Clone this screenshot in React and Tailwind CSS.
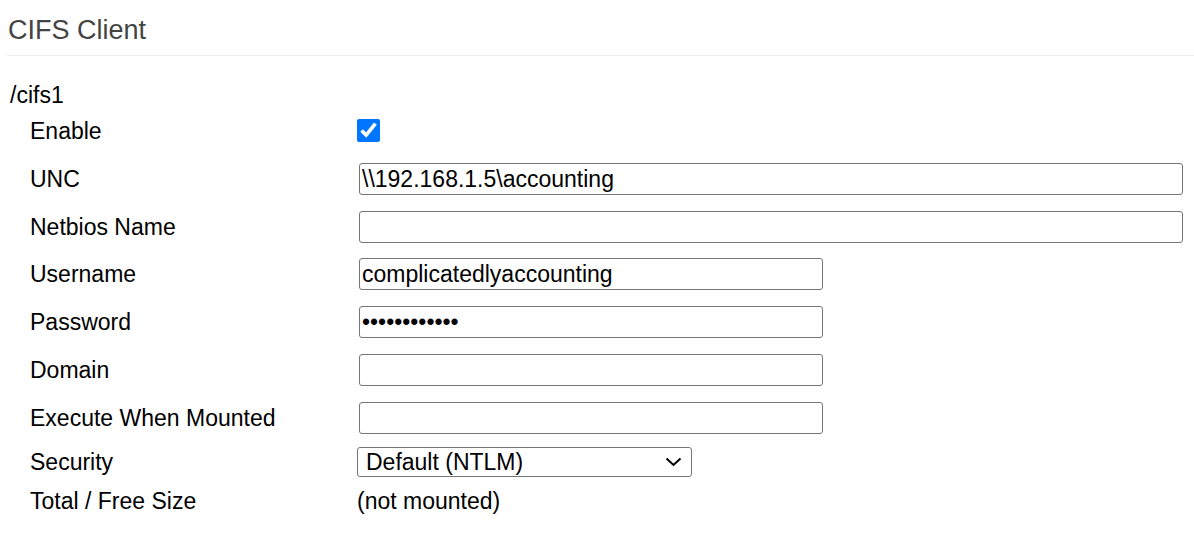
import { useState } from 'react';

const inputCls =
  'ml-[2px] h-[32px] border border-[#767676] rounded-[3px] px-[2px] text-[23px] leading-[28px] text-black bg-white outline-none';

function Row({ label, height, children }) {
  return (
    <div className="flex items-center" style={{ height }}>
      <div className="w-[357px] shrink-0 pl-[30px] text-[23px] leading-[28px] text-black">{label}</div>
      <div className="flex-1 flex items-center">{children}</div>
    </div>
  );
}

export default function App() {
  const [enabled, setEnabled] = useState(true);
  const [unc, setUnc] = useState('\\\\192.168.1.5\\accounting');
  const [netbios, setNetbios] = useState('');
  const [username, setUsername] = useState('complicatedlyaccounting');
  const [password, setPassword] = useState('secretpasswd');
  const [domain, setDomain] = useState('');
  const [execCmd, setExecCmd] = useState('');
  const [security, setSecurity] = useState('ntlm');

  return (
    <div className="w-[1194px] h-[536px] bg-white overflow-hidden font-['Liberation_Sans',Arial,sans-serif]">
      <div className="ml-[7px] h-[56px] border-b border-[#eeeeee] flex items-center">
        <h1 className="pl-[1px] text-[27px] leading-[32px] text-[#444444] mt-[4px]">CIFS Client</h1>
      </div>

      <div className="pl-[10px] pt-[25px] h-[51px] text-[23px] leading-[28px] text-black">/cifs1</div>

      <Row label="Enable" height={48}>
        <input
          type="checkbox"
          checked={enabled}
          onChange={(e) => setEnabled(e.target.checked)}
          className="m-0 w-[23px] h-[23px] accent-[#0075ff] -mt-[1px]"
        />
      </Row>
      <Row label="UNC" height={48}>
        <input className={`${inputCls} w-[824px]`} value={unc} onChange={(e) => setUnc(e.target.value)} />
      </Row>
      <Row label="Netbios Name" height={47}>
        <input className={`${inputCls} w-[824px]`} value={netbios} onChange={(e) => setNetbios(e.target.value)} />
      </Row>
      <Row label="Username" height={48}>
        <input className={`${inputCls} w-[464px]`} value={username} onChange={(e) => setUsername(e.target.value)} />
      </Row>
      <Row label="Password" height={48}>
        <input
          type="password"
          className={`${inputCls} w-[464px]`}
          value={password}
          onChange={(e) => setPassword(e.target.value)}
        />
      </Row>
      <Row label="Domain" height={48}>
        <input className={`${inputCls} w-[464px]`} value={domain} onChange={(e) => setDomain(e.target.value)} />
      </Row>
      <Row label="Execute When Mounted" height={47}>
        <input className={`${inputCls} w-[464px]`} value={execCmd} onChange={(e) => setExecCmd(e.target.value)} />
      </Row>
      <Row label="Security" height={42}>
        <div className="relative w-[335px] h-[30px]">
          <select
            value={security}
            onChange={(e) => setSecurity(e.target.value)}
            className="appearance-none w-full h-full border border-[#767676] rounded-[3px] pl-[8px] text-[23px] leading-[28px] text-black bg-white outline-none"
          >
            <option value="ntlm">Default (NTLM)</option>
            <option value="ntlmv2">NTLMv2</option>
            <option value="ntlmssp">NTLMSSP</option>
            <option value="none">None</option>
          </select>
          <svg
            className="absolute right-[10px] top-[10px] pointer-events-none"
            width="17"
            height="10"
            viewBox="0 0 17 10"
            fill="none"
          >
            <path d="M1.5 1.5L8.5 8L15.5 1.5" stroke="#000" strokeWidth="2" />
          </svg>
        </div>
      </Row>
      <Row label="Total / Free Size" height={36}>
        <span className="text-[23px] leading-[28px] text-black">(not mounted)</span>
      </Row>
    </div>
  );
}
